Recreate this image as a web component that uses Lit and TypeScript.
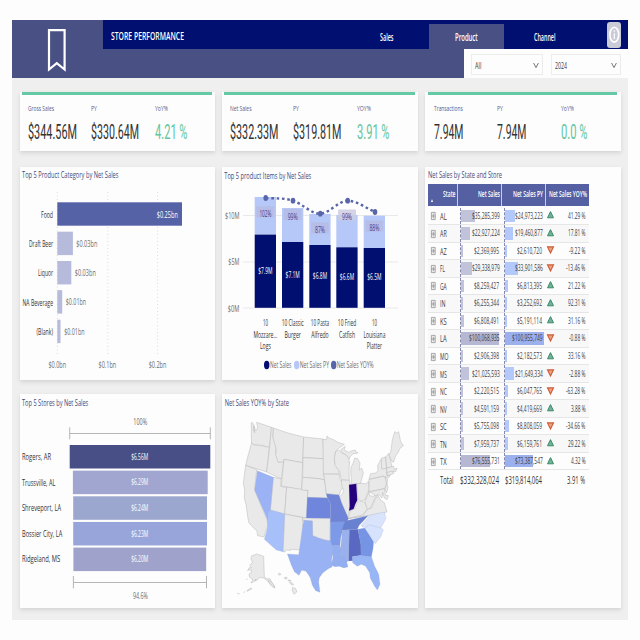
import { LitElement, html, css, svg } from "lit";
import { customElement } from "lit/decorators.js";

/* Condensed label inside an SVG: x is the start, middle or end of the run. */
const label = (x: number, y: number, w: number, text: string, cls = "", anchor = "start") =>
  svg`<text class=${cls} x=${x} y=${y} text-anchor=${anchor} textLength=${w} lengthAdjust="spacingAndGlyphs">${text}</text>`;

/* Condensed label that takes part in the HTML flow. */
const fit = (text: string, w: number, cls: string, h = 12, base = 9) =>
  html`<svg class="fit" width=${w} height=${h}>${label(0, base, w, text, cls)}</svg>`;

const numberWidth = (s: string) =>
  [...s].reduce((n, c) => n + (c === "%" ? 4.1 : c === "-" ? 1.7 : c === " " ? 1 : ",.".includes(c) ? 1.2 : 2.82), 0);

const kpis = [
  [["Gross Sales", 26, "$344.56M", 49], ["PY", 6, "$330.64M", 48], ["YoY%", 13, "4.21 %", 32.5]],
  [["Net Sales", 21.5, "$332.33M", 48.5], ["PY", 6, "$319.81M", 48.5], ["YOY%", 14, "3.91 %", 32.5]],
  [["Transactions", 28.7, "7.94M", 29.5], ["PY", 6, "7.94M", 29.5], ["YoY%", 13, "0.0 %", 26.5]],
] as [string, number, string, number][][];

const rows: [string, number, number, number][] = [
  ["AL", 35285399, 24973223, 41.29], ["AR", 22927224, 19460877, 17.81], ["AZ", 2369995, 2610720, -9.22],
  ["FL", 29338979, 33901586, -13.46], ["GA", 8259427, 6813395, 21.22], ["IN", 6255344, 3252692, 92.31],
  ["KS", 6808491, 5191114, 31.16], ["LA", 100068935, 100955749, -0.88], ["MO", 2906398, 2182573, 33.16],
  ["MS", 21025593, 21649334, -2.88], ["NC", 2220515, 6047765, -63.28], ["NV", 4591159, 4419669, 3.88],
  ["SC", 5755098, 8808059, -34.66], ["TN", 7959737, 6159761, 29.22], ["TX", 76555731, 73387547, 4.32],
];

const categories: [string, number, number, number, number, string, number][] = [
  ["Food", 12, 202.3, 124.7, 156.7, "$0.25bn", 21.3],
  ["Draft Beer", 24, 231.7, 15.6, 76.3, "$0.03bn", 21],
  ["Liquor", 15, 261, 14, 74.8, "$0.03bn", 21],
  ["NA Beverage", 30.5, 290.2, 4.9, 65.8, "$0.01bn", 20.3],
  ["(Blank)", 16.5, 319.7, 3.2, 64.2, "$0.01bn", 20.3],
];

interface Item { x: number; py: number; net: number; pct: string; pctY: number; val: string; valY: number; names: [string, number][] }
const items: Item[] = [
  { x: 254.7, py: 197, net: 234.6, pct: "102%", pctY: 216.8, val: "$7.9M", valY: 274, names: [["10", 5], ["Mozzare...", 24], ["Logs", 11]] },
  { x: 282, py: 208, net: 242, pct: "99%", pctY: 219.5, val: "$7.1M", valY: 278, names: [["10 Classic", 22], ["Burger", 16.3]] },
  { x: 309.3, py: 214, net: 245, pct: "87%", pctY: 233, val: "$6.8M", valY: 279.3, names: [["10 Pasta", 18.3], ["Alfredo", 17.3]] },
  { x: 336.3, py: 215, net: 247.3, pct: "99%", pctY: 220, val: "$6.6M", valY: 280.3, names: [["10 Fried", 18.3], ["Catfish", 16]] },
  { x: 363.7, py: 215.7, net: 248, pct: "88%", pctY: 231, val: "$6.5M", valY: 280.3, names: [["10", 5], ["Louisiana", 22], ["Platter", 15.3]] },
];

const stores: [string, number, string, number, number, string][] = [
  ["Rogers, AR", 29, "$6.56M", 69.7, 210.3, "#484f87"],
  ["Trussville, AL", 33.3, "$6.29M", 72.9, 207.7, "#a0a6d0"],
  ["Shreveport, LA", 39, "$6.24M", 73.2, 207, "#9ca7d0"],
  ["Bossier City, LA", 40.3, "$6.23M", 73.2, 207, "#98a5da"],
  ["Ridgeland, MS", 38.3, "$6.20M", 73.4, 206.2, "#9fa3cb"],
];

/* State outlines in map units. */
const plain = [
  "M100 97l7 5 3 26-4-8 2-12 5 14 6-8-3-17 45 15-7 60-28-6-18-1-7-7-1-12z",
  "M101 158l7 7 18 1 28 6-8 74-63-20 5-21z",
  "M83 226l33 13-6 61 38 92 1 16-5 14-6 19-19-4-2-14-15-14-10-12-3-18-5-36-5-18 1-25-4-19 3-25z",
  "M160 112l6 2-1 27 10 26-2 21 8 28 16-1-7 52-44-21 9-74z",
  "M166 114l44 15 47 12-3 77-56-10-2 8-15 1-8-22 2-17-10-35z",
  "M198 208l56 10-3 82-61-12z",
  "M166 262l24 5-2 22 18 4-6 79-43-12z",
  "M206 291l64 10-4 83-66-12z",
  "M200 372l54 11-2 97-34-2v3l-16-1-1 6-6-1z",
  "M257 141l58 6 2 59-62-3z",
  "M255 203l62 3v46l3 18-17-4-49-4z",
  "M254 262l49 4 17 4 5 41 5 13-62-2 2-21-19-1z",
  "M254 383l83 2-1 67-16-2-10-3-9-1-6-5-11-4-1-44-29-2z",
  "M315 148l11 1 1-11 5 6 15 5 12 8 20 6-13 9-13 11-4 22 2 17 13 17-1 13-47 1z",
  "M317 252l47 1 2 16 7 9 5 13-10 11-4 13-39-4-5-41z",
  "M353 185l9-5 9 8 17 8 6 10-1 12 2-2-2 23 1 32-24-1-5-25-14-19-2-21z",
  "M370 270l24 1 3 17-2 56 2 10-9 31-8-18-9-20-8-24 10-12 4-9-5-13z",
  "M368 179l14-10-4 10 14 8 10-5 10-2 1 5 7 4-14 2-8 7-6 8-6-10-14-8z",
  "M399 283l29-3 3-12 5-19-5-15-7 7 2-22-7-13-9-2-4 14-7 14-1 14 2 17z",
  "M417 282l14-2 12 1 9-7 2 24-6 13-7 19-10 3-11-5z",
  "M388 386l5-9 5-16 12-5 10-23 12 2 9 2 8 19-15 19z",
  "M441 335l12-30 2 12 12 2 9-9 5 7-9 3-7 19-9 17-8 3z",
  "M453 268l47-10 7 15-3 16-5 7-46 9z",
  "M388 386l46-8 15-20 11-4 14-32 9-2 4 10 12 8 4 14 4 14-57 11z",
  "M455 306l44-10 4 20 8 1-4 12-8-5-5-17-2 17-10-11-9 4z",
  "M501 262l8 5-2 14 3 12-4 15-6-11 6-14z",
  "M453 268l5-17 16-2 6-8-1-14 9-18 15-8 3 34 1 23 10-2-6 8-16-6z",
  "M490 205l13-4 3 34-15 2z", "M503 201l9-10 8 30 2 10-16 4z",
  "M506 235l20-7 3 10 8-4-3 10-8 2-20 4z", "M507 247l19-4v8l-18 6z",
  "M512 191l6-3 5-38 7-25 6 4 6-4 6 30 8 12-11 9-4 11-8 10-6 19-5-1z",
  "M100 498l16-6 21 7 2 62 9 6 6-2 9 14 7 10-1 4-11-8-9-12-12-9-13-2-6 8-7 3 3-6-7 9-8 3 6-10-10-7-2-10 8-5-1-6-9-1 2-7 8 1-6-8 4-5 5-4-5-9z",
  "M88 601l10-7 4 2-15 8z", "M76 608l6-4M66 612l-9-2M92 540l-5 2M89 566l-5 4",
  "M150 571l8 3 10 12 3 8-8-5-8-10z",
  "M180 552l5-3 4 4-4 3z", "M199 563l7-2 1 5-6 1z", "M210 570l9 1-1 3-8-2z", "M214 577l9 2 4 5-6 1z", "M224 592l9 4 4 9-9 8-6-13z",
];
const shaded: [string, string][] = [
  ["#9bb3f5", "M118 242l48 20-9 98-5 8-2 24-40-92z"],
  ["#a7c0fa", "M157 360l43 12-5 113-20-5-36-32 6-20 4-18-1-18 2-24z"],
  ["#98b2f3", "M257 391l26 2 1 44 20 8 16 5 18 3 6 12 1 25-4 18 1 23-11 5-17 13-10 14-2 12 4 32-13-5-10-16-6-22-7-12-7-9-12-2-8 15-14-11-9-20-12-33 34 2z"],
  ["#6f86dc", "M268 322l60 2 9 16v45l-72-1z"],
  ["#6f84d6", "M325 311l38 4 8 24 9 20 8 18 3 9-5 14-8-4-41 1V340l-9-16z"],
  ["#7c9ae8", "M337 396l41-1 3 5-7 20-6 23-2 23-23 1-6-15z"],
  ["#93aff1", "M343 466l23-1 3 14-6 19 19 1 7 15-3 2 4 14-12 4-14-5-13 1-11-4 5-24z"],
  ["#6981d1", "M381 393l69-16-14 16-12 12-6 13-46 3 5-18z"],
  ["#9ab1ed", "M373 421l21-2-2 94-11 1-3-15h-17l7-22z"],
  ["#5968c0", "M394 419l26-1 9 45 1 33-27 4 2 12-13 1z"],
  ["#7595e4", "M420 418l21-4 12 19 14 22-2 21-5 25-31-2-1-36z"],
  ["#98b5f5", "M403 500l27-4 30 4 10 29 12 23 4 31-8 17-8-11-13-24-2-17-12-19-13-6-12 6-14-11z"],
  ["#d7e2ff", "M440 414l14-10 16 1 15 7 11 7-8 22-16 20-7-9-12-19z"],
  ["#d9e3fb", "M430 405l19-20 5-9 45-10 5 19-7 13-9 16-18-5-14-5-15 8-8-1z"],
  ["#25007c", "M393 284l22-3 3 50-6 12-5 14-14 5 2-14z"],
];

@customElement("app-root")
export class AppRoot extends LitElement {
  static styles = css`
    :host { display: block; width: 640px; height: 640px; background: #fdfdfd; box-sizing: border-box; padding: 20px 12px;
      font-family: "Open Sans", "Noto Sans", sans-serif; overflow: hidden; }
    * { box-sizing: border-box; }
    svg { display: block; flex: none; overflow: visible; }
    text { font-family: "Open Sans", "Noto Sans", sans-serif; font-size: 9.3px; font-weight: 500; fill: #333; }
    .board { width: 616px; height: 600px; background: #efefef; display: flex; flex-direction: column; }
    .header { height: 58px; display: flex; background: #495083; }
    .logo { width: 91px; padding: 7.5px 0 0 35px; }
    .head { flex: 1; display: flex; flex-direction: column; }
    .bar { height: 29px; background: #000f70; display: flex; padding-left: 7.5px; }
    .heading { width: 238px; padding-top: 10px; }
    .tab { width: 76px; margin-top: 4px; padding-top: 8.4px; display: flex; justify-content: center; }
    .tab.first { padding-left: 1px; }
    .tab.active { background: #495083; width: 75px; margin-left: 4.5px; }
    .tab.last { width: 82px; }
    .info { margin: 2px 0 0 20.5px; width: 14.5px; height: 25.5px; border-radius: 3px; background: #c9cbd6; }
    .filters { height: 29px; margin-left: 361px; background: #fdfdfd; display: flex; gap: 8px; padding: 5px 7px; }
    .select { height: 21px; width: 72px; border: 1px solid #ececec; display: flex; justify-content: space-between; padding: 5px 3px 0 2.5px; }
    .select.year { width: 70px; }
    .kpis { display: grid; grid-template-columns: 195px 196px 196px; column-gap: 7px; padding: 14px 0 0 8px; height: 89px; }
    .panel { background: #fdfdfd; box-shadow: 0 2px 4px #d3d3d3; }
    .kpi { height: 59px; padding: 0 2px; }
    .kpi:last-child { padding: 0 3px; }
    .accent { height: 3px; background: #66c8a4; margin-right: .8px; }
    .metrics { display: grid; grid-template-columns: repeat(3, 63.3px); padding: 7.3px 0 0 6.2px; }
    .metric { display: flex; flex-direction: column; gap: 6.2px; }
    .kname { font-size: 8px; fill: #55598a; }
    .kval { font-family: Roboto, sans-serif; font-size: 19.6px; font-weight: 400; fill: #333; }
    .good { fill: #62c69e; }
    .main { display: grid; grid-template-columns: 195px 196px 196px; grid-template-rows: 212.5px 214px; gap: 14.5px 7px; padding-left: 8px; }
    .states { grid-column: 3; grid-row: 1 / 3; padding: 2px 0 0 3px; }
    .title { font-size: 9.6px; fill: #434a7a; }
    .white { fill: #fff; }
    .bold { font-weight: 600; font-size: 10px; fill: #fff; }
    .h1 { font-weight: 600; font-size: 11.5px; fill: #fff; }
    .dim { fill: #6c6c6c; }
    .pct { fill: #4b3990; }
    .small { font-size: 8.8px; fill: #fff; }
    .store { font-size: 9.8px; fill: #333; }
    .cell { font-size: 9px; fill: #3c3c44; }
    .th { font-size: 9px; font-weight: 600; fill: #fff; }
    .total { font-size: 10.3px; fill: #333; }
    .thead { width: 160.5px; height: 22px; margin-top: 3px; background: #5560a3; display: grid; grid-template-columns: 29px 44.3px 43.5px 43.7px; }
    .thead > div { display: flex; justify-content: flex-end; align-items: flex-end; padding: 0 1.8px 7.2px 0; border-left: 1px solid #c9cce4; }
    .thead > div:first-child { border: 0; justify-content: space-between; padding-left: 3px; }
    .sort { width: 0; height: 0; border: 1.6px solid transparent; border-bottom: 3px solid #fff; margin-bottom: -3px; }
    .tbody { padding-top: 1.5px; }
    .tr { display: grid; grid-template-columns: 32px 44.3px 43.2px 41px; width: 160.5px; height: 17.54px; border-bottom: 1px solid #e6e6e6; }
    .tr:nth-child(even) { background: #f8f8f8; }
    .key { display: flex; align-items: center; gap: 4.6px; padding-left: 2.7px; }
    .value { display: flex; align-items: center; justify-content: flex-end; padding-right: 4.9px; border-left: 1px dashed #8588b0; position: relative; }
    .value + .value { padding-right: 5.2px; }
    .databar { position: absolute; left: 0; top: 2px; height: 12.5px; background: #c1c3db; }
    .databar.py { background: #b4c9fb; }
    .databar.full { background: #9db0ee; }
    .databar.dark { background: #b6b8d3; }
    .value svg { position: relative; }
    .yoy { display: flex; align-items: center; justify-content: space-between; padding: 0 2.8px 0 0; }
    .sum { display: flex; padding: 3.5px 0 0 11.7px; }
    .gap1 { margin-left: 7px; } .gap2 { margin-left: 6px; } .gap3 { margin-left: 25.3px; }
  `;

  private frame(x: number, y: number, w: number, h: number, body: unknown) {
    return html`<div class="panel"><svg width=${w} height=${h} viewBox="${x} ${y} ${w} ${h}">${body}</svg></div>`;
  }

  private categoryChart() {
    return this.frame(20, 167, 195, 212, svg`
      ${label(22, 177.8, 96.5, "Top 5 Product Category by Net Sales", "title")}
      ${[57.3, 107.8, 157.6].map((x) => svg`<path d="M${x} 192V355" stroke="#dcdcdc" stroke-dasharray="1 2.5"/>`)}
      ${categories.map(([name, nw, y, w, vx, v, vw], i) => svg`
        <rect x="57.3" y=${y} width=${w} height="23.4" fill=${i ? "#b6badb" : "#5562a6"}/>
        ${label(53, y + 15.4, nw, name, "", "end")}
        ${label(vx, y + 15.2, vw, v, i ? "dim" : "white")}`)}
      ${["$0.0bn", "$0.1bn", "$0.2bn"].map((t, i) => label(57.3 + i * 50.1, 367.8, 17.7, t, "dim", "middle"))}`);
  }

  private itemChart() {
    const line = [[265.7, 198], [293, 200.7], [320.3, 213.7], [347.7, 200.7], [375, 212]];
    return this.frame(222, 167, 196, 213, svg`
      ${label(224.3, 178.5, 87, "Top 5 product Items by Net Sales", "title")}
      ${[215.5, 262, 308].map((y) => svg`<path d="M243 ${y}H398" stroke="#e9e9e9"/>`)}
      ${label(225, 219, 14.5, "$10M", "dim")}${label(228.3, 265.3, 11, "$5M", "dim")}${label(227.7, 311.5, 11.5, "$0M", "dim")}
      ${items.map((d) => {
        const c = d.x + 10.7;
        return svg`<rect x=${d.x} y=${d.py} width="21.3" height=${d.net - d.py} fill="#b5c8f7"/>
          <rect x=${c - 9} y=${d.pctY - 10.5} width="18" height="11" rx="1" fill=${d.x === 336.3 ? "#cccde2" : "#b6bce4"} opacity=".85"/>
          <rect x=${d.x} y=${d.net} width="21.3" height=${307.8 - d.net} fill="#000f70"/>
          ${label(c, d.pctY, d.pct.length > 3 ? 12 : 10, d.pct, "pct", "middle")}
          ${label(c, d.valY, 14.3, d.val, "small", "middle")}
          ${d.names.map(([t, w], i) => label(c, 326.4 + i * 11.1, w, t, "", "middle"))}`;
      })}
      <path d="M265.7 198C276 198.5 285 198 293 200.7C303 204 311 214 320.3 213.7C330 213 338 201 347.7 200.7C357 201 366 208 375 212"
        fill="none" stroke="#5865a8" stroke-width="2.4" stroke-dasharray="2.6 2.8"/>
      ${line.map(([x, y]) => svg`<ellipse cx=${x} cy=${y} rx="2.3" ry="2.9" fill="#5865a8"/>`)}
      ${[[266.7, "#000f70"], [296.7, "#b5c8f7"], [333.7, "#5865a8"]].map(([x, c]) => svg`<ellipse cx=${x} cy="365" rx="2.7" ry="4.2" fill=${c}/>`)}
      ${label(270, 368.2, 21.3, "Net Sales", "dim")}${label(299.7, 368.2, 29.3, "Net Sales PY", "dim")}${label(336.7, 368.2, 37, "Net Sales YOY%", "dim")}`);
  }

  private storeChart() {
    return this.frame(20, 394, 195, 214, svg`
      ${label(22, 405.7, 66.3, "Top 5 Stores by Net Sales", "title")}
      ${label(140.3, 425, 14, "100%", "dim", "middle")}
      <path d="M69.7 427.3V439.3M210.3 427.3V439.3M69.7 433.5H210.3M73.4 576V588.3M206.5 576V588.3M73.4 582.5H206.5" stroke="#b5b5b5" fill="none"/>
      ${stores.map(([name, w, v, x0, x1, c], i) => svg`
        <rect x=${x0} y=${445 + i * 25.65} width=${x1 - x0} height="23.5" fill=${c}/>
        ${label(22, 460.2 + i * 25.55, w, name, "store")}
        ${label(139.7, 459.8 + i * 25.6, 17, v, "small", "middle")}`)}
      ${label(140.4, 598.8, 15, "94.6%", "dim", "middle")}`);
  }

  private mapChart() {
    return this.frame(222, 394, 196, 214, svg`
      ${label(224.7, 405.7, 64.3, "Net Sales YOY% by State", "title")}
      <g transform="translate(218 390) scale(.33333)" stroke-linejoin="round">
        ${plain.map((d) => svg`<path d=${d} fill="#e9e9e9" stroke="#b0b0b0" stroke-width="1.3"/>`)}
        ${shaded.map(([c, d]) => svg`<path d=${d} fill=${c} stroke="#8f9cc8" stroke-width=".6"/>`)}
      </g>`);
  }

  private value(n: number, kind: string) {
    const text = "$" + n.toLocaleString("en-US");
    const full = n > 7e7 ? (kind ? "full" : "dark") : "";
    return html`<div class="value">
      <div class="databar ${kind} ${full}" style="width:${(Math.max(n / 1.01e8, 0.04) * 38.5).toFixed(1)}px"></div>
      ${fit(text, numberWidth(text), "cell")}</div>`;
  }

  private table() {
    return html`<div class="panel states">
      ${fit("Net Sales by State and Store", 74, "title", 12, 8.8)}
      <div class="thead">
        <div><span class="sort"></span>${fit("State", 12.5, "th", 10, 8)}</div>
        <div>${fit("Net Sales", 22, "th", 10, 8)}</div>
        <div>${fit("Net Sales PY", 30, "th", 10, 8)}</div>
        <div>${fit("Net Sales YOY%", 38, "th", 10, 8)}</div>
      </div>
      <div class="tbody">${rows.map(([s, a, b, y]) => {
        const pct = y.toFixed(2) + " %";
        return html`<div class="tr">
          <div class="key">
            <svg width="4.6" height="9" viewBox="0 0 4.6 9"><path d="M.4 1.4H4.2V8.6H.4ZM.4 5H4.2M2.3 2.8V7.2" fill="#eee" stroke="#888" stroke-width=".7"/></svg>
            ${fit(s, s === "FL" ? 4.8 : s === "MO" ? 8.5 : s === "IN" ? 5.5 : 6.7, "cell", 12, 9.6)}
          </div>
          ${this.value(a, "")}${this.value(b, "py")}
          <div class="yoy">
            <svg width="7" height="9" viewBox="0 0 7 9">${y > 0
              ? svg`<path d="M3.5 .6L6.5 6.8H.5Z" fill="#72b397" stroke="#3d8a6c" stroke-width="1"/>`
              : svg`<path d="M3.5 7L6.5 .9H.5Z" fill="#eda184" stroke="#cc5b35" stroke-width="1.1"/>`}</svg>
            ${fit(pct, numberWidth(pct), "cell")}
          </div>
        </div>`;
      })}</div>
      <div class="sum">
        ${fit("Total", 13.5, "total", 14, 10)}
        <span class="gap1">${fit("$332,328,024", 39, "total", 14, 10)}</span>
        <span class="gap2">${fit("$319,814,064", 37, "total", 14, 10)}</span>
        <span class="gap3">${fit("3.91 %", 18, "total", 14, 10)}</span>
      </div>
    </div>`;
  }

  private select(text: string, w: number, cls = "") {
    return html`<div class="select ${cls}">${fit(text, w, "cell", 11, 8.6)}
      <svg width="6" height="9" viewBox="0 0 6 9"><path d="M.6 3L3 7.6L5.4 3" fill="none" stroke="#555" stroke-width=".8"/></svg></div>`;
  }

  render() {
    return html`<div class="board">
      <div class="header">
        <div class="logo"><svg width="20" height="46" viewBox="0 0 20 46"><path d="M2 2.2H17.6V41.5L9.8 35.2L2 41.5Z" fill="none" stroke="#fff" stroke-width="2.2"/></svg></div>
        <div class="head">
          <div class="bar">
            <div class="heading">${fit("STORE PERFORMANCE", 73, "h1", 14, 10.2)}</div>
            <div class="tab first">${fit("Sales", 13.5, "bold")}</div>
            <div class="tab active">${fit("Product", 22.7, "bold")}</div>
            <div class="tab last">${fit("Channel", 21.5, "bold")}</div>
            <div class="info"><svg width="14.5" height="25.5" viewBox="0 0 14.5 25.5">
              <ellipse cx="7.3" cy="12.7" rx="4.4" ry="7.4" fill="none" stroke="#fff" stroke-width="1.6"/>
              <path d="M7.3 8.2V9.8M7.3 11.2V17" stroke="#fff" stroke-width="1.2"/></svg></div>
          </div>
          <div class="filters">${this.select("All", 6.3)}${this.select("2024", 12, "year")}</div>
        </div>
      </div>
      <div class="kpis">${kpis.map((card) => html`<div class="panel kpi"><div class="accent"></div>
        <div class="metrics">${card.map(([n, nw, v, vw], i) => html`<div class="metric">
          ${fit(n, nw, "kname", 11, 9)}${fit(v, vw, "kval" + (i === 2 ? " good" : ""), 24, 19.5)}</div>`)}</div></div>`)}</div>
      <div class="main">${this.categoryChart()}${this.itemChart()}${this.table()}${this.storeChart()}${this.mapChart()}</div>
    </div>`;
  }
}
